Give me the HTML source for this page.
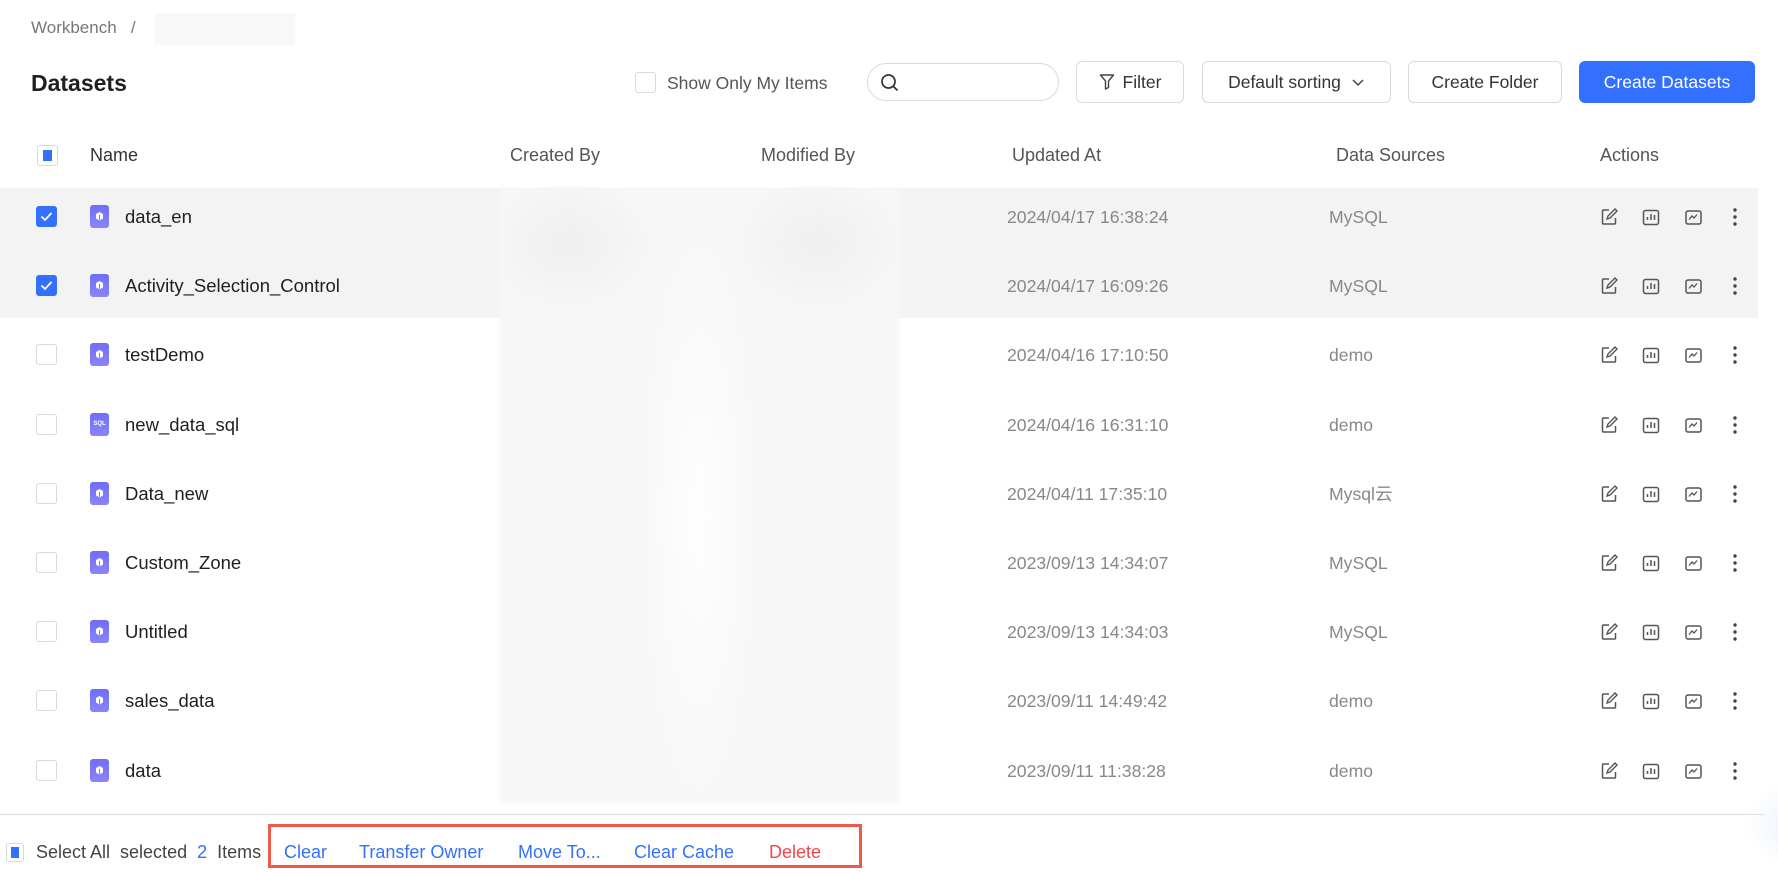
<!DOCTYPE html>
<html><head><meta charset="utf-8"><style>
*{margin:0;padding:0;box-sizing:border-box}
body{width:1778px;height:872px;background:#fff;font-family:"Liberation Sans","Noto Sans CJK SC",sans-serif;color:#1f1f1f;position:relative;overflow:hidden}
.a{position:absolute;white-space:nowrap;line-height:1.2}
.btn{position:absolute;border:1px solid #d9d9d9;border-radius:6px;background:#fff;font-size:17.5px;color:#333;display:flex;align-items:center;justify-content:center;height:42px;top:61px}
.cb{position:absolute;width:21px;height:21px;border:1px solid #d9d9d9;border-radius:3px;background:#fff}
.cbc{background:#3370ff;border-color:#3370ff}
.hd{position:absolute;top:145px;font-size:18px;color:#333;line-height:20px}
.nm{position:absolute;left:125px;font-size:18.5px;color:#1f1f1f;line-height:22px}
.dt{position:absolute;left:1007px;font-size:17.6px;color:#888;line-height:20px}
.ds{position:absolute;left:1329px;font-size:17.6px;color:#888;line-height:20px;font-family:"Liberation Sans",sans-serif}
.ic{position:absolute;left:90px;width:19px;height:23px;border-radius:3px;background:linear-gradient(#6f6df6,#8a84fb)}
.f{font-size:18px;top:842px;line-height:20px}
</style></head><body>
<div class="a" style="left:31px;top:18px;font-size:17px;color:#777">Workbench&nbsp;&nbsp;&nbsp;/</div>
<div class="a" style="left:155px;top:13px;width:140px;height:32px;background:#f8f8f8"></div>
<div class="a" style="left:31px;top:70px;font-size:23px;font-weight:bold;color:#1f1f1f">Datasets</div>
<div class="cb" style="left:635px;top:72px;border-radius:3px"></div>
<div class="a" style="left:667px;top:73px;font-size:17.5px;color:#555">Show Only My Items</div>
<div class="a" style="left:867px;top:63px;width:192px;height:38px;border:1px solid #d9d9d9;border-radius:19px"></div>
<svg class="a" style="left:880px;top:73px" width="20" height="20" viewBox="0 0 20 20"><circle cx="8.5" cy="8.5" r="6.5" fill="none" stroke="#333" stroke-width="1.7"/><path d="M13.5 13.5l4 4" stroke="#333" stroke-width="1.7"/></svg>
<div class="btn" style="left:1076px;width:108px"><svg width="16" height="18" viewBox="0 0 16 18" style="margin-right:8px"><path d="M1.5 2h13l-5 6v6.5l-3 1.5V8z" fill="none" stroke="#444" stroke-width="1.4" stroke-linejoin="round"/></svg>Filter</div>
<div class="btn" style="left:1202px;width:189px">Default sorting<svg width="14" height="10" viewBox="0 0 14 10" style="margin-left:10px"><path d="M2 3l5 5 5-5" fill="none" stroke="#444" stroke-width="1.5"/></svg></div>
<div class="btn" style="left:1408px;width:154px">Create Folder</div>
<div class="btn" style="left:1579px;width:176px;background:#3370ff;border-color:#3370ff;color:#fff">Create Datasets</div>
<div class="cb" style="left:37px;top:145px"><div style="position:absolute;left:5px;top:4px;width:9px;height:11px;background:#3370ff"></div></div>
<div class="hd" style="left:90px">Name</div>
<div class="hd" style="left:510px;color:#555">Created By</div>
<div class="hd" style="left:761px;color:#555">Modified By</div>
<div class="hd" style="left:1012px;color:#555">Updated At</div>
<div class="hd" style="left:1336px;color:#555">Data Sources</div>
<div class="hd" style="left:1600px;color:#555">Actions</div>
<div class="a" style="left:0;top:188px;width:1758px;height:130px;background:#f3f3f3"></div>
<div class="a" style="left:499px;top:188px;width:400px;height:615px;background:radial-gradient(ellipse 90px 70px at 70px 55px,#efefef,transparent),radial-gradient(ellipse 90px 70px at 320px 55px,#efefef,transparent),radial-gradient(ellipse 60px 300px at 200px 330px,#fefefe,#f7f7f7);filter:blur(2px)"></div>
<div id="rows"></div>
<div class="a" style="left:0;top:814px;width:1765px;height:1px;background:#ddd"></div>
<div class="cb" style="left:6px;top:843px;width:18px;height:19px"><div style="position:absolute;left:4px;top:3px;width:8px;height:11px;background:#3370ff"></div></div>
<div class="a f" style="left:36px;color:#444">Select All&nbsp;&nbsp;selected&nbsp;&nbsp;<span style="color:#3370ff">2</span>&nbsp;&nbsp;Items</div>
<div class="a" style="left:268px;top:824px;width:594px;height:44px;border:3px solid #f05a4a"></div>
<div class="a f" style="left:284px;color:#3370ff">Clear</div>
<div class="a f" style="left:359px;color:#3370ff">Transfer Owner</div>
<div class="a f" style="left:518px;color:#3370ff">Move To...</div>
<div class="a f" style="left:634px;color:#3370ff">Clear Cache</div>
<div class="a f" style="left:769px;color:#f04848">Delete</div>
<div class="a" style="left:1745px;top:780px;width:60px;height:90px;background:radial-gradient(ellipse at right,#e8efff,transparent 70%)"></div>
<script>
var d=[["data_en","2024/04/17 16:38:24","MySQL",1],["Activity_Selection_Control","2024/04/17 16:09:26","MySQL",1],["testDemo","2024/04/16 17:10:50","demo",0],["new_data_sql","2024/04/16 16:31:10","demo",0,1],["Data_new","2024/04/11 17:35:10","Mysql<span style=\"font-family:'Noto Sans CJK SC';line-height:20px\">云</span>",0],["Custom_Zone","2023/09/13 14:34:07","MySQL",0],["Untitled","2023/09/13 14:34:03","MySQL",0],["sales_data","2023/09/11 14:49:42","demo",0],["data","2023/09/11 11:38:28","demo",0]];
var h="";
d.forEach(function(r,i){var c=216+i*69.2;
h+='<div class="cb'+(r[3]?' cbc':'')+'" style="left:36px;top:'+(c-10)+'px">'+(r[3]?'<svg width="19" height="19" viewBox="0 0 19 19"><path d="M4.5 9.5l3.5 3.5 6.5-7" fill="none" stroke="#fff" stroke-width="1.8"/></svg>':'')+'</div>';
h+='<div class="ic" style="top:'+(c-11)+'px">'+(r[4]?'<div style="font-size:6px;color:#fff;font-weight:bold;text-align:center;line-height:23px">SQL</div>':'<svg width="19" height="23" viewBox="0 0 19 23"><path d="M6 9l3.5-2 3.5 2v4.5l-3.5 2-3.5-2z" fill="#fff"/><path d="M9.5 10v5" stroke="#7d78f8" stroke-width="1"/></svg>')+'</div>';
h+='<div class="nm" style="top:'+(c-10)+'px">'+r[0]+'</div>';
h+='<div class="dt" style="top:'+(c-9)+'px">'+r[1]+'</div>';
h+='<div class="ds" style="top:'+(c-9)+'px;height:20px;overflow:visible">'+r[2]+'</div>';
h+='<svg class="a" style="left:1600px;top:'+(c-9)+'px" width="150" height="20" viewBox="0 0 150 20">'+
'<path d="M9 3H3.5a1 1 0 0 0-1 1v12a1 1 0 0 0 1 1h11a1 1 0 0 0 1-1v-5" fill="none" stroke="#555" stroke-width="1.5"/><path d="M7 12l1-3 7-7 2 2-7 7z" fill="none" stroke="#555" stroke-width="1.4"/>'+
'<rect x="43.5" y="3.5" width="15" height="14" rx="2" fill="none" stroke="#555" stroke-width="1.5"/><path d="M47.5 13v-3M51 13V7M54.5 13V8" stroke="#555" stroke-width="1.5"/>'+
'<rect x="86" y="4" width="15" height="13" rx="2" fill="none" stroke="#555" stroke-width="1.5"/><path d="M89 12.5l3-3.5 2 2 3-3.5" fill="none" stroke="#555" stroke-width="1.3"/>'+
'<circle cx="135" cy="3" r="1.7" fill="#444"/><circle cx="135" cy="10" r="1.7" fill="#444"/><circle cx="135" cy="17" r="1.7" fill="#444"/></svg>';
});
document.getElementById("rows").innerHTML=h;
</script>
</body></html>
